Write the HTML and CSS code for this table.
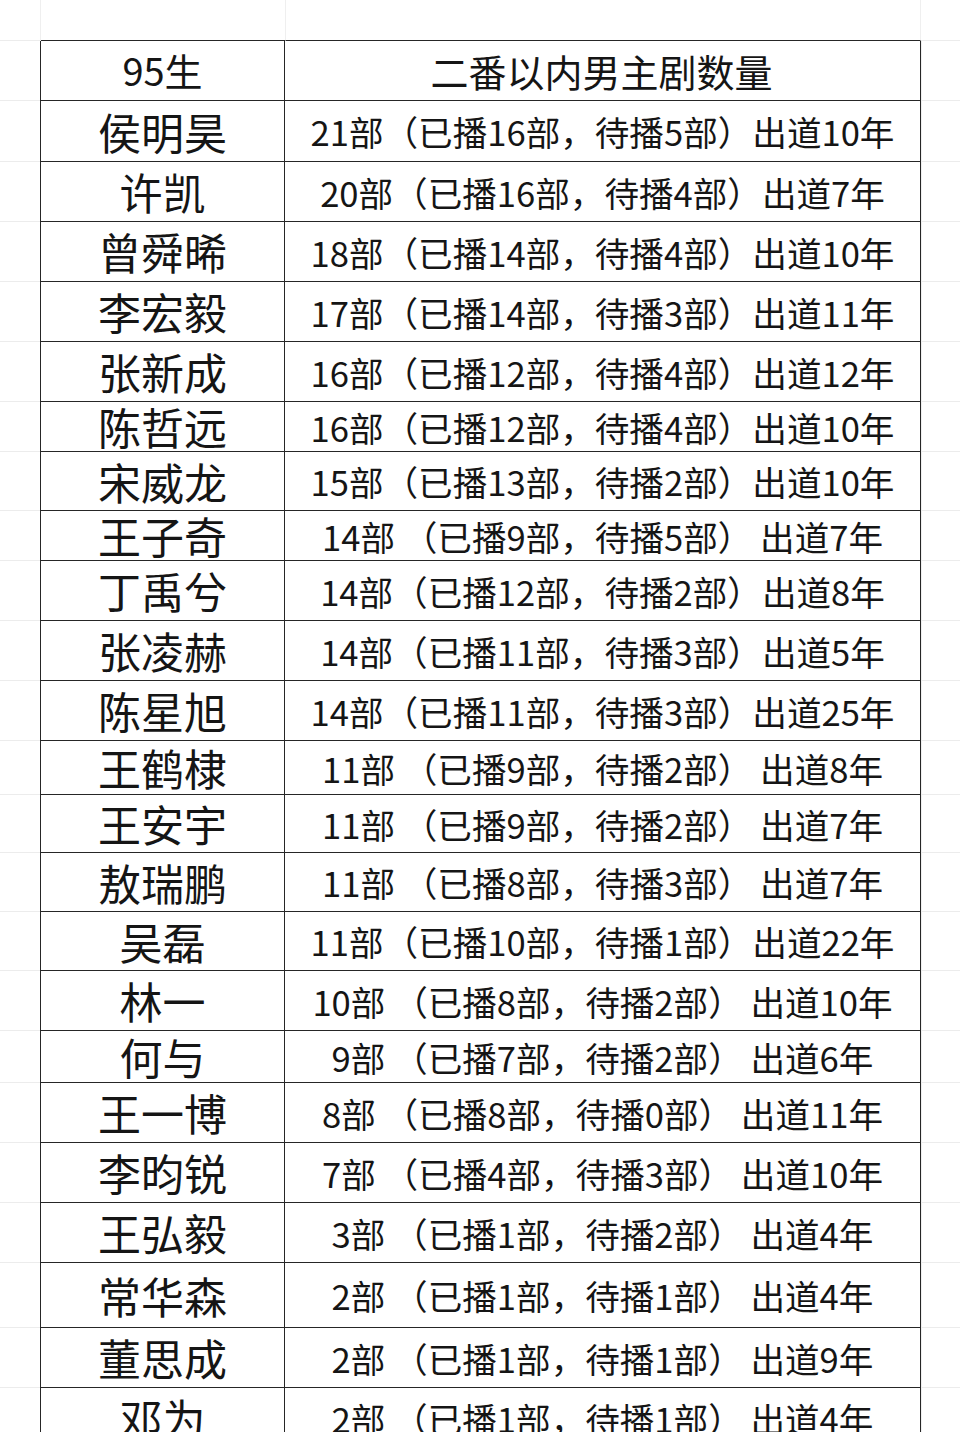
FILE: index.html
```html
<!DOCTYPE html>
<html lang="zh-CN">
<head>
<meta charset="utf-8">
<title>95生 二番以内男主剧数量</title>
<link rel="stylesheet" href="styles.css">
</head>
<body>
<div class="sheet">
  <div class="row top h41"><div class="m l"></div><div class="c n blank"></div><div class="c d blank"></div><div class="m r"></div></div>
  <div class="row head h60"><div class="m l"></div><div class="c n">95生</div><div class="c d hd">二番以内男主剧数量</div><div class="m r"></div></div>
  <div class="row h61"><div class="m l"></div><div class="c n">侯明昊</div><div class="c d">21部（已播16部，待播5部）出道10年</div><div class="m r"></div></div>
  <div class="row h60"><div class="m l"></div><div class="c n">许凯</div><div class="c d">20部（已播16部，待播4部）出道7年</div><div class="m r"></div></div>
  <div class="row h60"><div class="m l"></div><div class="c n">曾舜晞</div><div class="c d">18部（已播14部，待播4部）出道10年</div><div class="m r"></div></div>
  <div class="row h60"><div class="m l"></div><div class="c n">李宏毅</div><div class="c d">17部（已播14部，待播3部）出道11年</div><div class="m r"></div></div>
  <div class="row h60"><div class="m l"></div><div class="c n">张新成</div><div class="c d">16部（已播12部，待播4部）出道12年</div><div class="m r"></div></div>
  <div class="row h50"><div class="m l"></div><div class="c n">陈哲远</div><div class="c d">16部（已播12部，待播4部）出道10年</div><div class="m r"></div></div>
  <div class="row h59"><div class="m l"></div><div class="c n">宋威龙</div><div class="c d">15部（已播13部，待播2部）出道10年</div><div class="m r"></div></div>
  <div class="row h50"><div class="m l"></div><div class="c n">王子奇</div><div class="c d">14部 （已播9部，待播5部） 出道7年</div><div class="m r"></div></div>
  <div class="row h60"><div class="m l"></div><div class="c n">丁禹兮</div><div class="c d">14部（已播12部，待播2部）出道8年</div><div class="m r"></div></div>
  <div class="row h60"><div class="m l"></div><div class="c n">张凌赫</div><div class="c d">14部（已播11部，待播3部）出道5年</div><div class="m r"></div></div>
  <div class="row h60"><div class="m l"></div><div class="c n">陈星旭</div><div class="c d">14部（已播11部，待播3部）出道25年</div><div class="m r"></div></div>
  <div class="row h54"><div class="m l"></div><div class="c n">王鹤棣</div><div class="c d">11部 （已播9部，待播2部） 出道8年</div><div class="m r"></div></div>
  <div class="row h58"><div class="m l"></div><div class="c n">王安宇</div><div class="c d">11部 （已播9部，待播2部） 出道7年</div><div class="m r"></div></div>
  <div class="row h59"><div class="m l"></div><div class="c n">敖瑞鹏</div><div class="c d">11部 （已播8部，待播3部） 出道7年</div><div class="m r"></div></div>
  <div class="row h59"><div class="m l"></div><div class="c n">吴磊</div><div class="c d">11部（已播10部，待播1部）出道22年</div><div class="m r"></div></div>
  <div class="row h60"><div class="m l"></div><div class="c n">林一</div><div class="c d">10部 （已播8部，待播2部） 出道10年</div><div class="m r"></div></div>
  <div class="row h52"><div class="m l"></div><div class="c n">何与</div><div class="c d">9部 （已播7部，待播2部） 出道6年</div><div class="m r"></div></div>
  <div class="row h60"><div class="m l"></div><div class="c n">王一博</div><div class="c d">8部 （已播8部，待播0部） 出道11年</div><div class="m r"></div></div>
  <div class="row h60"><div class="m l"></div><div class="c n">李昀锐</div><div class="c d">7部 （已播4部，待播3部） 出道10年</div><div class="m r"></div></div>
  <div class="row h60"><div class="m l"></div><div class="c n">王弘毅</div><div class="c d">3部 （已播1部，待播2部） 出道4年</div><div class="m r"></div></div>
  <div class="row h65"><div class="m l"></div><div class="c n">常华森</div><div class="c d">2部 （已播1部，待播1部） 出道4年</div><div class="m r"></div></div>
  <div class="row h60"><div class="m l"></div><div class="c n">董思成</div><div class="c d">2部 （已播1部，待播1部） 出道9年</div><div class="m r"></div></div>
  <div class="row h60"><div class="m l"></div><div class="c n">邓为</div><div class="c d">2部 （已播1部，待播1部） 出道4年</div><div class="m r"></div></div>
</div>
</body>
</html>
```

FILE: styles.css
```css
html, body {
  margin: 0;
  padding: 0;
  background: #ffffff;
}
body {
  width: 960px;
  height: 1432px;
  overflow: hidden;
  font-family: "Noto Sans CJK SC", "Noto Sans", sans-serif;
  color: #151515;
}
.sheet {
  display: flex;
  flex-direction: column;
}
.row {
  display: flex;
  flex: none;
}
.h41 { height: 41px; }
.h50 { height: 50px; }
.h52 { height: 52px; }
.h54 { height: 54px; }
.h58 { height: 58px; }
.h59 { height: 59px; }
.h60 { height: 60px; }
.h61 { height: 61px; }
.h65 { height: 65px; }

.m {
  box-sizing: border-box;
  border-bottom: 1px solid #ececec;
}
.m.l {
  width: 41px;
  border-right: 1px solid #efefef;
}
.m.r {
  flex: 1;
  border-left: 1px solid #efefef;
}
.c {
  box-sizing: border-box;
  display: flex;
  align-items: center;
  justify-content: center;
  white-space: pre;
  line-height: 0.9;
  border-bottom: 1px solid #262626;
}
.n {
  width: 245px;
  border-left: 1px solid #262626;
  border-right: 1px solid #262626;
  font-size: 43px;
  margin-left: -1px;
}
.d {
  width: 636px;
  border-right: 1px solid #262626;
  font-size: 34.6px;
  padding-top: 2px;
}
.top .c {
  border-left: none;
  border-right: 1px solid #efefef;
}
.top .n {
  margin-left: 0;
  width: 245px;
}
.top .d {
  width: 635px;
}
.top .m.r { border-left: none; }
.head .n, .head .d {
  font-size: 38px;
}
.hd {
  padding-right: 2px;
}
```
